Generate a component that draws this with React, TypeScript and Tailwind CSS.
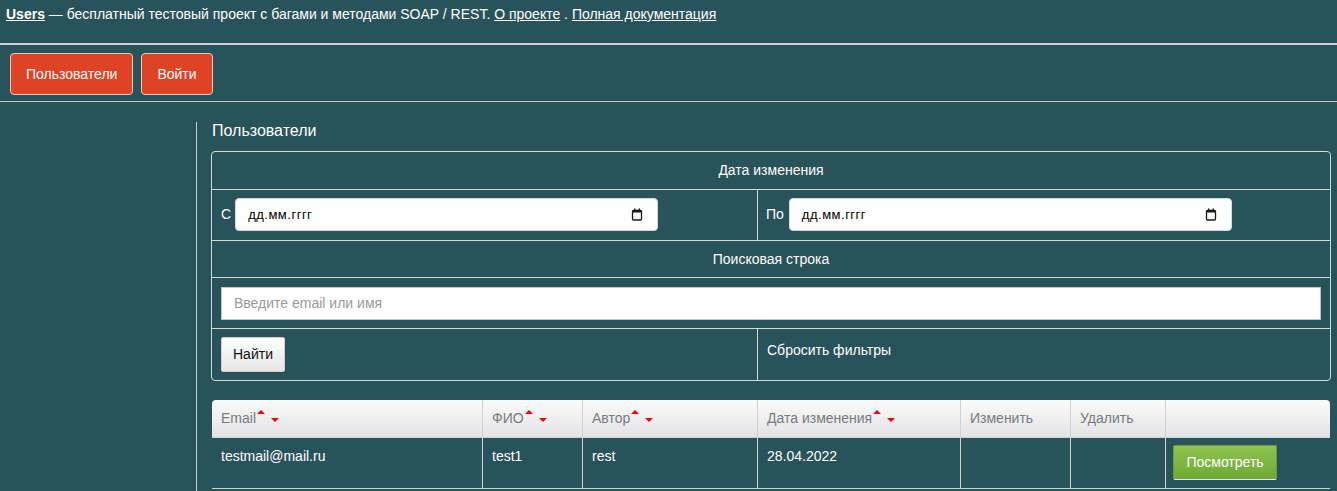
import React from 'react'

const font = { fontFamily: '"Liberation Sans", Arial, sans-serif' }

function SortArrows() {
  return (
    <span className="relative inline-block w-[24px] h-[14px] align-middle">
      <span className="absolute left-[1px] top-[-2px] w-0 h-0 border-l-[4px] border-r-[4px] border-b-[4px] border-l-transparent border-r-transparent border-b-[#ff0000]" />
      <span className="absolute left-[15px] top-[6px] w-0 h-0 border-l-[4px] border-r-[4px] border-t-[4px] border-l-transparent border-r-transparent border-t-[#ff0000]" />
    </span>
  )
}

function CalendarIcon() {
  return (
    <svg width="12" height="13" viewBox="0 0 12 13" fill="none">
      <rect x="1.5" y="2.5" width="9" height="9.5" rx="1" stroke="#1a1a1a" strokeWidth="1.3" />
      <rect x="1.5" y="2.5" width="9" height="2" fill="#1a1a1a" />
      <rect x="3" y="0.5" width="1.4" height="2.5" fill="#1a1a1a" />
      <rect x="7.6" y="0.5" width="1.4" height="2.5" fill="#1a1a1a" />
    </svg>
  )
}

function DateField({ width }: { width: string }) {
  return (
    <div className={`${width} h-[33px] bg-white rounded-[4px] border border-[#d9d9d9] flex items-center justify-between pl-[12px] pr-[14px]`}>
      <span className="text-[13px] text-black tracking-[0.5px]">дд.мм.гггг</span>
      <CalendarIcon />
    </div>
  )
}

export default function App() {
  const columns = [
    { title: 'Email', w: 'w-[271px]', sort: true },
    { title: 'ФИО', w: 'w-[100px]', sort: true },
    { title: 'Автор', w: 'w-[175px]', sort: true },
    { title: 'Дата изменения', w: 'w-[203px]', sort: true },
    { title: 'Изменить', w: 'w-[110px]', sort: false },
    { title: 'Удалить', w: 'w-[95px]', sort: false },
    { title: '', w: 'flex-1', sort: false },
  ]
  const row = ['testmail@mail.ru', 'test1', 'rest', '28.04.2022', '', '']

  return (
    <div className="min-h-[491px] bg-[#29535b] text-white text-[14px] overflow-hidden" style={font}>
      <div className="h-[43px] pl-[6px] pt-[4px] leading-[20px]">
        <a className="font-bold underline">Users</a> — бесплатный тестовый проект с багами и методами SOAP / REST.{' '}
        <a className="underline">О проекте</a> . <a className="underline">Полная документация</a>
      </div>
      <div className="h-[2px] bg-[#cfd3d4]" />
      <div className="flex gap-[8px] pl-[10px] pt-[8px] pb-[6px]">
        <button className="h-[42px] px-[15px] bg-[#de4325] border border-[#e8c9c2] rounded-[4px] text-white">Пользователи</button>
        <button className="h-[42px] px-[15px] bg-[#de4325] border border-[#e8c9c2] rounded-[4px] text-white">Войти</button>
      </div>
      <div className="h-[1px] bg-[#c4cacb]" />
      <div className="flex mt-[20px]">
        <div className="w-[197px] border-r border-[#c9cfd0] min-h-[380px]" />
        <div className="flex-1 pl-[14px] pr-[6px]">
          <div className="text-[16px] leading-[18px] pl-[1px]">Пользователи</div>
          <div className="mt-[11px] border border-[#d5d9da] rounded-[4px] grid grid-cols-[546px_1fr]">
            <div className="col-span-2 h-[38px] flex items-center justify-center border-b border-[#d5d9da]">Дата изменения</div>
            <div className="h-[51px] flex items-start pt-[8px] pl-[9px] gap-[4px] border-b border-r border-[#d5d9da]">
              <span className="leading-[33px]">С</span>
              <DateField width="w-[423px]" />
            </div>
            <div className="h-[51px] flex items-start pt-[8px] pl-[8px] gap-[5px] border-b border-[#d5d9da]">
              <span className="leading-[33px]">По</span>
              <DateField width="w-[443px]" />
            </div>
            <div className="col-span-2 h-[37px] flex items-center justify-center border-b border-[#d5d9da]">Поисковая строка</div>
            <div className="col-span-2 h-[51px] flex items-center px-[9px] border-b border-[#d5d9da]">
              <div className="w-full h-[33px] bg-white border border-[#c4c4c8] flex items-center pl-[12px] text-[#9a9a9a]">
                Введите email или имя
              </div>
            </div>
            <div className="h-[51px] pl-[9px] pt-[8px] border-r border-[#d5d9da]">
              <button className="h-[35px] px-[11px] rounded-[2px] border border-[#d0d0d0] bg-gradient-to-b from-white to-[#e6e6e6] text-[#111]">Найти</button>
            </div>
            <div className="h-[51px] pl-[9px] pt-[11px]">Сбросить фильтры</div>
          </div>

          <div className="mt-[19px] ml-[1px] flex w-[1118px] rounded-t-[4px] overflow-hidden bg-gradient-to-b from-[#fbfbfb] to-[#e3e3e6] border-b border-[#cfd3d4]">
            {columns.map((c, i) => (
              <div
                key={i}
                className={`${c.w} h-[37px] flex items-center pl-[9px] text-[#787b80] ${i < columns.length - 1 ? 'border-r border-[#d0d0d0]' : ''}`}
              >
                {c.title}
                {c.sort && <SortArrows />}
              </div>
            ))}
          </div>
          <div className="ml-[1px] flex w-[1118px] border-b border-[#cfd3d4]">
            {columns.map((c, i) => (
              <div
                key={i}
                className={`${c.w} h-[50px] ${i === 6 ? 'pt-[7px] pl-[7px]' : 'pt-[8px] pl-[9px]'} ${i < columns.length - 1 ? 'border-r border-[#cfd3d4]' : ''}`}
              >
                {i < 6 ? (
                  row[i]
                ) : (
                  <button className="h-[35px] w-[104px] rounded-[2px] border border-[#6d9e35] border-b-[#e5f0da] bg-gradient-to-b from-[#8cc44e] to-[#6fa834] text-white">
                    Посмотреть
                  </button>
                )}
              </div>
            ))}
          </div>
        </div>
      </div>
    </div>
  )
}
